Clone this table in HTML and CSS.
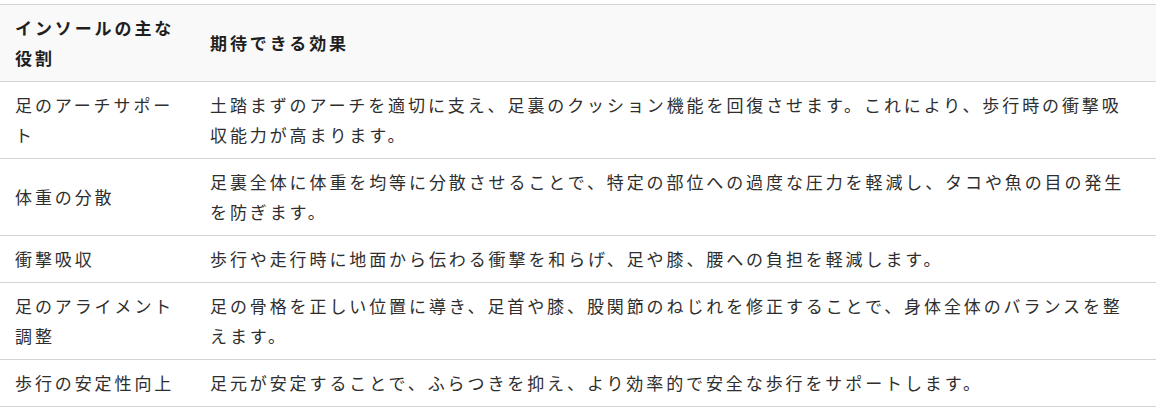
FILE: index.html
```html
<!DOCTYPE html>
<html lang="ja">
<head>
<meta charset="utf-8">
<title>インソールの役割</title>
<link rel="stylesheet" href="styles.css">
</head>
<body>
<table class="effects">
  <colgroup>
    <col class="col-role">
    <col class="col-effect">
  </colgroup>
  <thead>
    <tr>
      <th>インソールの主な役割</th>
      <th>期待できる効果</th>
    </tr>
  </thead>
  <tbody>
    <tr>
      <td>足のアーチサポート</td>
      <td>土踏まずのアーチを適切に支え、足裏のクッション機能を回復させます。これにより、歩行時の衝撃吸収能力が高まります。</td>
    </tr>
    <tr>
      <td>体重の分散</td>
      <td>足裏全体に体重を均等に分散させることで、特定の部位への過度な圧力を軽減し、タコや魚の目の発生を防ぎます。</td>
    </tr>
    <tr>
      <td>衝撃吸収</td>
      <td>歩行や走行時に地面から伝わる衝撃を和らげ、足や膝、腰への負担を軽減します。</td>
    </tr>
    <tr>
      <td>足のアライメント調整</td>
      <td>足の骨格を正しい位置に導き、足首や膝、股関節のねじれを修正することで、身体全体のバランスを整えます。</td>
    </tr>
    <tr>
      <td>歩行の安定性向上</td>
      <td>足元が安定することで、ふらつきを抑え、より効率的で安全な歩行をサポートします。</td>
    </tr>
  </tbody>
</table>
</body>
</html>
```

FILE: styles.css
```css
html, body {
  margin: 0;
  padding: 0;
  background: #ffffff;
}

body {
  padding-top: 4px;
  font-family: "Noto Sans CJK JP", "Noto Sans", sans-serif;
  font-size: 17px;
  color: #2e2e2e;
}

.effects {
  width: 100%;
  border-collapse: collapse;
  table-layout: fixed;
  border-top: 1px solid #d4d4d4;
}

.col-role {
  width: 195px;
}

.effects th,
.effects td {
  text-align: left;
  vertical-align: middle;
  padding: 8px 20px 8px 15px;
  line-height: 30px;
  letter-spacing: 2.9px;
  border-bottom: 1px solid #d4d4d4;
}

.effects td {
  font-weight: 400;
}

.effects th {
  background: #f9f9f9;
  font-weight: 700;
  color: #1f1f1f;
}
```
